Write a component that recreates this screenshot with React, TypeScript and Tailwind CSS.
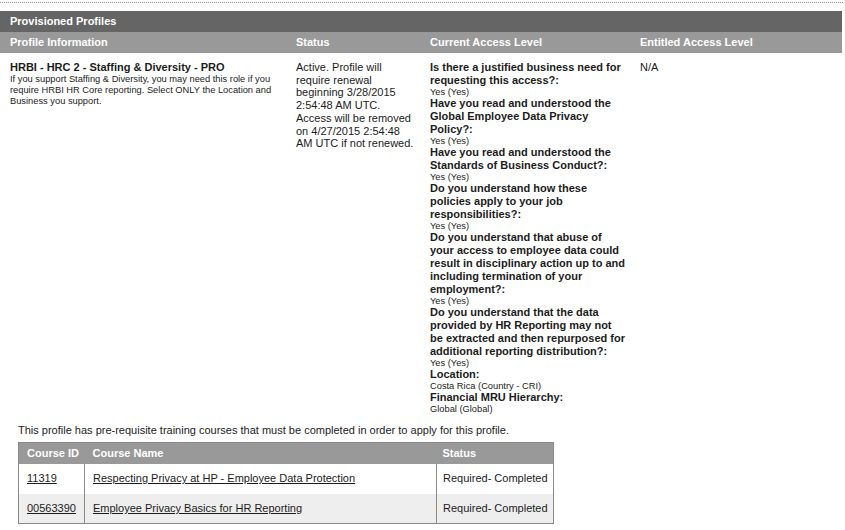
const questions: { q: string; a: string }[] = [
  { q: 'Is there a justified business need for requesting this access?:', a: 'Yes (Yes)' },
  { q: 'Have you read and understood the Global Employee Data Privacy Policy?:', a: 'Yes (Yes)' },
  { q: 'Have you read and understood the Standards of Business Conduct?:', a: 'Yes (Yes)' },
  { q: 'Do you understand how these policies apply to your job responsibilities?:', a: 'Yes (Yes)' },
  {
    q: 'Do you understand that abuse of your access to employee data could result in disciplinary action up to and including termination of your employment?:',
    a: 'Yes (Yes)',
  },
  {
    q: 'Do you understand that the data provided by HR Reporting may not be extracted and then repurposed for additional reporting distribution?:',
    a: 'Yes (Yes)',
  },
  { q: 'Location:', a: 'Costa Rica (Country - CRI)' },
  { q: 'Financial MRU Hierarchy:', a: 'Global (Global)' },
];

const courses = [
  { id: '11319', name: 'Respecting Privacy at HP - Employee Data Protection', status: 'Required- Completed' },
  { id: '00563390', name: 'Employee Privacy Basics for HR Reporting', status: 'Required- Completed' },
];

export default function App() {
  return (
    <div className="h-[530px] w-[845px] overflow-hidden bg-white font-['Liberation_Sans',Arial,sans-serif] text-[#1c1c1c]">
      <div className="pt-[2px]">
        <div className="w-[843px] border-t border-dotted border-[#9a9a9a]" />
      </div>

      <div className="mt-[8px] w-[842px]">
        <div className="flex h-[21px] items-center bg-[#656565] pl-[10px] text-[11px] font-bold text-white">
          Provisioned Profiles
        </div>
        <div className="grid h-[21px] grid-cols-[286px_134px_210px_1fr] items-center bg-[#999999] pl-[10px] text-[11px] font-bold text-white">
          <div>Profile Information</div>
          <div>Status</div>
          <div>Current Access Level</div>
          <div>Entitled Access Level</div>
        </div>

        <div className="grid grid-cols-[286px_134px_210px_1fr] pl-[10px] pt-[8px]">
          <div className="pr-[10px]">
            <div className="text-[11px] font-bold leading-[13px]">HRBI - HRC 2 - Staffing &amp; Diversity - PRO</div>
            <div className="text-[9.3px] leading-[11px]">
              If you support Staffing &amp; Diversity, you may need this role if you require HRBI HR Core reporting.
              Select ONLY the Location and Business you support.
            </div>
          </div>
          <div className="pr-[13px] text-[11px] leading-[12.7px]">
            Active. Profile will require renewal beginning 3/28/2015 2:54:48 AM UTC. Access will be removed on
            4/27/2015 2:54:48 AM UTC if not renewed.
          </div>
          <div className="pr-[13px]">
            {questions.map((item) => (
              <div key={item.q}>
                <div className="text-[11px] font-bold leading-[13px]">{item.q}</div>
                <div className="text-[9.3px] leading-[10px]">{item.a}</div>
              </div>
            ))}
          </div>
          <div className="text-[11px] leading-[13px]">N/A</div>
        </div>
      </div>

      <div className="pl-[18px] pt-[10px]">
        <p className="text-[11px] leading-[13px]">
          This profile has pre-requisite training courses that must be completed in order to apply for this profile.
        </p>
        <table className="mt-[5px] w-[535px] table-fixed border-collapse border border-[#8a8a8a] text-[11px] whitespace-nowrap">
          <colgroup>
            <col className="w-[66px]" />
            <col className="w-[352px]" />
            <col className="w-[117px]" />
          </colgroup>
          <thead>
            <tr className="h-[21px] bg-[#999999] text-left font-bold text-white">
              <th className="px-[8px] font-bold">Course ID</th>
              <th className="px-[8px] font-bold">Course Name</th>
              <th className="px-[6px] font-bold">Status</th>
            </tr>
          </thead>
          <tbody>
            {courses.map((c, i) => (
              <tr key={c.id} className={i % 2 === 1 ? 'h-[30px] bg-[#eeeeee]' : 'h-[30px] bg-white'}>
                <td className="border-r border-[#8a8a8a] px-[8px]">
                  <a className="underline">{c.id}</a>
                </td>
                <td className="border-r border-[#8a8a8a] px-[8px]">
                  <a className="underline">{c.name}</a>
                </td>
                <td className="px-[6px]">{c.status}</td>
              </tr>
            ))}
          </tbody>
        </table>
      </div>
    </div>
  );
}
